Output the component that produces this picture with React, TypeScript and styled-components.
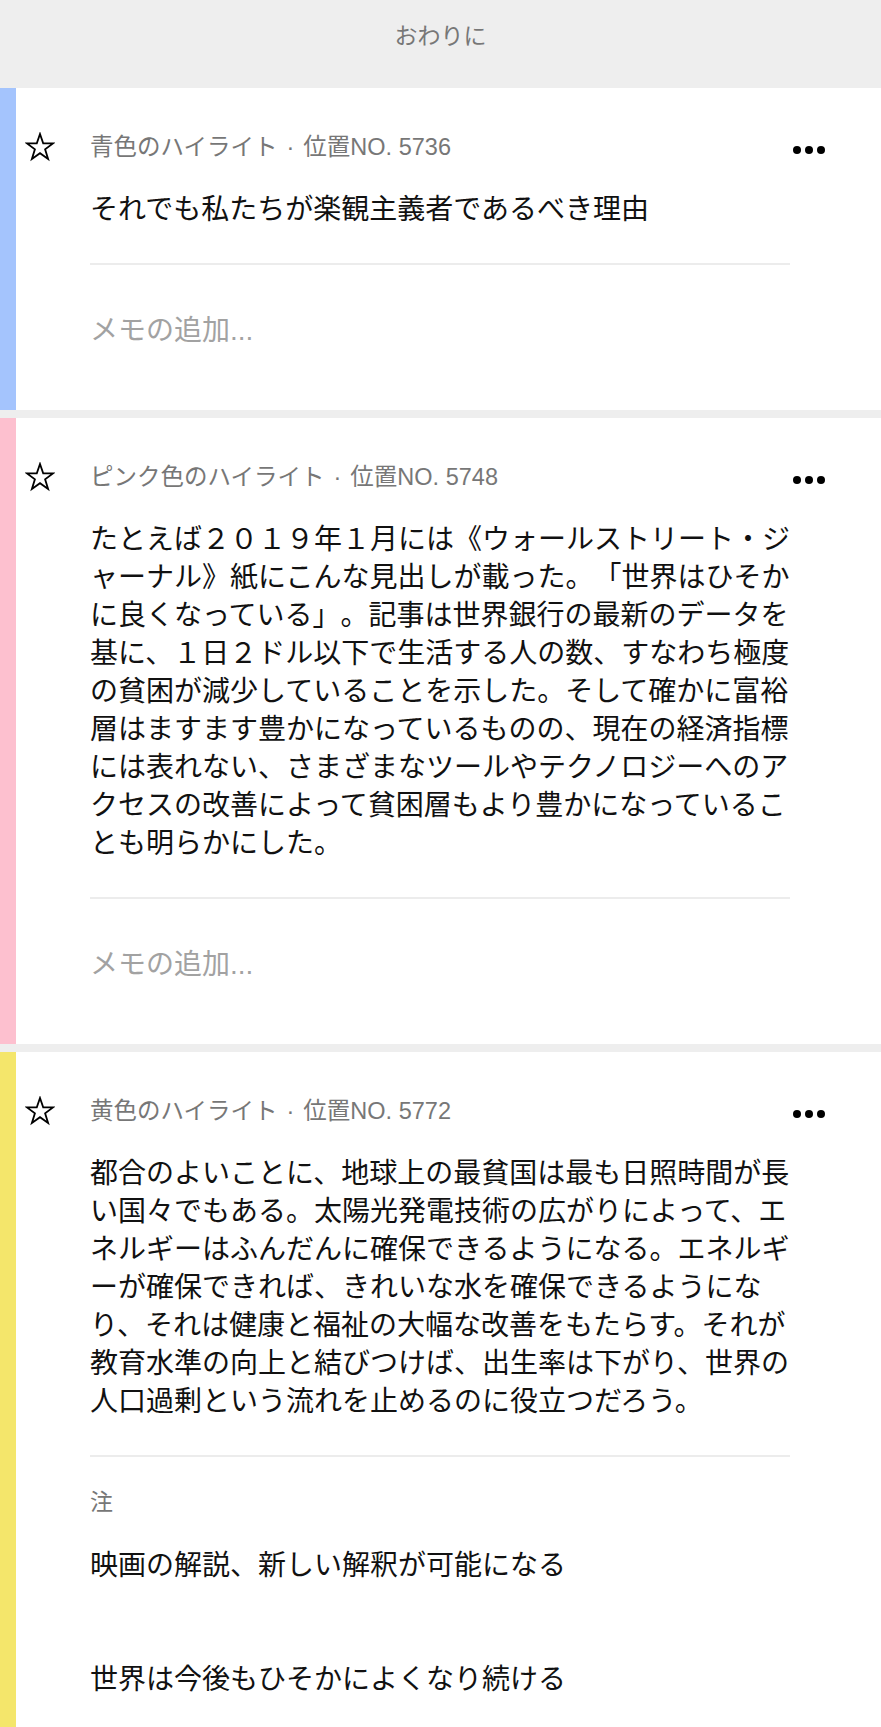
import styled, {createGlobalStyle} from "styled-components";

const GlobalStyle = createGlobalStyle`
  html, body {
    margin: 0;
    padding: 0;
    background: #eeeeee;
  }
  body {
    font-family: "Liberation Sans", "Noto Sans CJK JP", sans-serif;
    color: #111;
  }
`;

const Page = styled.div`
  background: #eeeeee;
  line-break: loose;
  word-break: normal;
  text-spacing-trim: space-all;
`;

const Header = styled.header`
  height: 88px;
  box-sizing: border-box;
  padding-top: 21px;
  text-align: center;
  font-size: 23px;
  line-height: 30px;
  color: #777;
`;

const List = styled.div`
  display: flex;
  flex-direction: column;
  gap: 8px;
`;

const Card = styled.section`
  display: flex;
  background: white;
`;

const Bar = styled.div<{ $color: string }>`
  width: 16px;
  flex-shrink: 0;
  background: ${p => p.$color};
`;

const Inner = styled.div`
  flex: 1;
  display: grid;
  grid-template-columns: 74px 700px 1fr;
  align-content: start;
  padding: 44px 0 60px;
`;

const StarCell = styled.div`
  display: flex;
  align-items: center;
  padding-left: 9px;
`;

const Meta = styled.div`
  font-size: 23.5px;
  line-height: 30px;
  color: #777;
  white-space: nowrap;
`;

const Sep = styled.span`
  padding: 0 9px;
`;

const Dots = styled.div`
  display: flex;
  align-items: center;
  gap: 4px;
  padding: 6px 0 0 3px;

  > span {
    width: 8px;
    height: 8px;
    border-radius: 50%;
    background: #000;
  }
`;

const Text = styled.p`
  grid-column: 2;
  margin: 29px 0 0;
  font-size: 28px;
  line-height: 38px;
  color: #111;
`;

const Divider = styled.hr`
  grid-column: 2;
  margin: 34px 0 0;
  border: none;
  height: 2px;
  background: #ececec;
`;

const Memo = styled.div`
  grid-column: 2;
  margin-top: 47px;
  font-size: 28px;
  line-height: 38px;
  color: #a2a2a2;
`;

const NoteLabel = styled.div`
  grid-column: 2;
  margin-top: 30px;
  font-size: 23px;
  line-height: 30px;
  color: #777;
`;

const Note = styled.div<{ $first?: boolean }>`
  grid-column: 2;
  margin-top: ${p => (p.$first ? "30px" : "76px")};
  font-size: 28px;
  line-height: 38px;
  color: #111;
`;

const Star = () => (
  <svg width="30" height="30" viewBox="0 0 30 30">
    <polygon
      points="15,2 18.2,11.4 28,11.4 20.1,17.3 23.1,27 15,21.2 6.9,27 9.9,17.3 2,11.4 11.8,11.4"
      fill="none"
      stroke="#000"
      strokeWidth="1.8"
      strokeLinejoin="miter"
    />
  </svg>
);

type Highlight = {
  color: string;
  kind: string;
  location: string;
  text: string;
  notes?: string[];
};

// \u200B lets the line break before a small kana, as the reader does
const highlights: Highlight[] = [
  {
    color: "#a4c4fd",
    kind: "青色のハイライト",
    location: "位置NO. 5736",
    text: "それでも私たちが楽観主義者であるべき理由",
  },
  {
    color: "#fdc0cf",
    kind: "ピンク色のハイライト",
    location: "位置NO. 5748",
    text: "たとえば２０１９年１月には《ウォールストリート・ジ\u200Bャーナル》紙にこんな見出しが載った。「世界はひそかに良くなっている」。記事は世界銀行の最新のデータを基に、１日２ドル以下で生活する人の数、すなわち極度の貧困が減少していることを示した。そして確かに富裕層はますます豊かになっているものの、現在の経済指標には表れない、さまざまなツールやテクノロジーへのアクセスの改善によって貧困層もより豊かになっていることも明らかにした。",
  },
  {
    color: "#f4e66b",
    kind: "黄色のハイライト",
    location: "位置NO. 5772",
    text: "都合のよいことに、地球上の最貧国は最も日照時間が長い国々でもある。太陽光発電技術の広がりによって、エネルギーはふんだんに確保できるようになる。エネルギーが確保できれば、きれいな水を確保できるようになり、それは健康と福祉の大幅な改善をもたらす。それが教育水準の向上と結びつけば、出生率は下がり、世界の人口過剰という流れを止めるのに役立つだろう。",
    notes: ["映画の解説、新しい解釈が可能になる", "世界は今後もひそかによくなり続ける"],
  },
];

const App = () => {
  return (
    <Page lang="ja">
      <GlobalStyle/>
      <Header>おわりに</Header>
      <List>
        {highlights.map((h) => (
          <Card key={h.location}>
            <Bar $color={h.color}/>
            <Inner>
              <StarCell><Star/></StarCell>
              <Meta>{h.kind}<Sep>·</Sep>{h.location}</Meta>
              <Dots><span/><span/><span/></Dots>
              <Text>{h.text}</Text>
              <Divider/>
              {h.notes ? (
                <>
                  <NoteLabel>注</NoteLabel>
                  {h.notes.map((n, i) => (
                    <Note key={n} $first={i === 0}>{n}</Note>
                  ))}
                </>
              ) : (
                <Memo>メモの追加...</Memo>
              )}
            </Inner>
          </Card>
        ))}
      </List>
    </Page>
  );
};

export default App;
